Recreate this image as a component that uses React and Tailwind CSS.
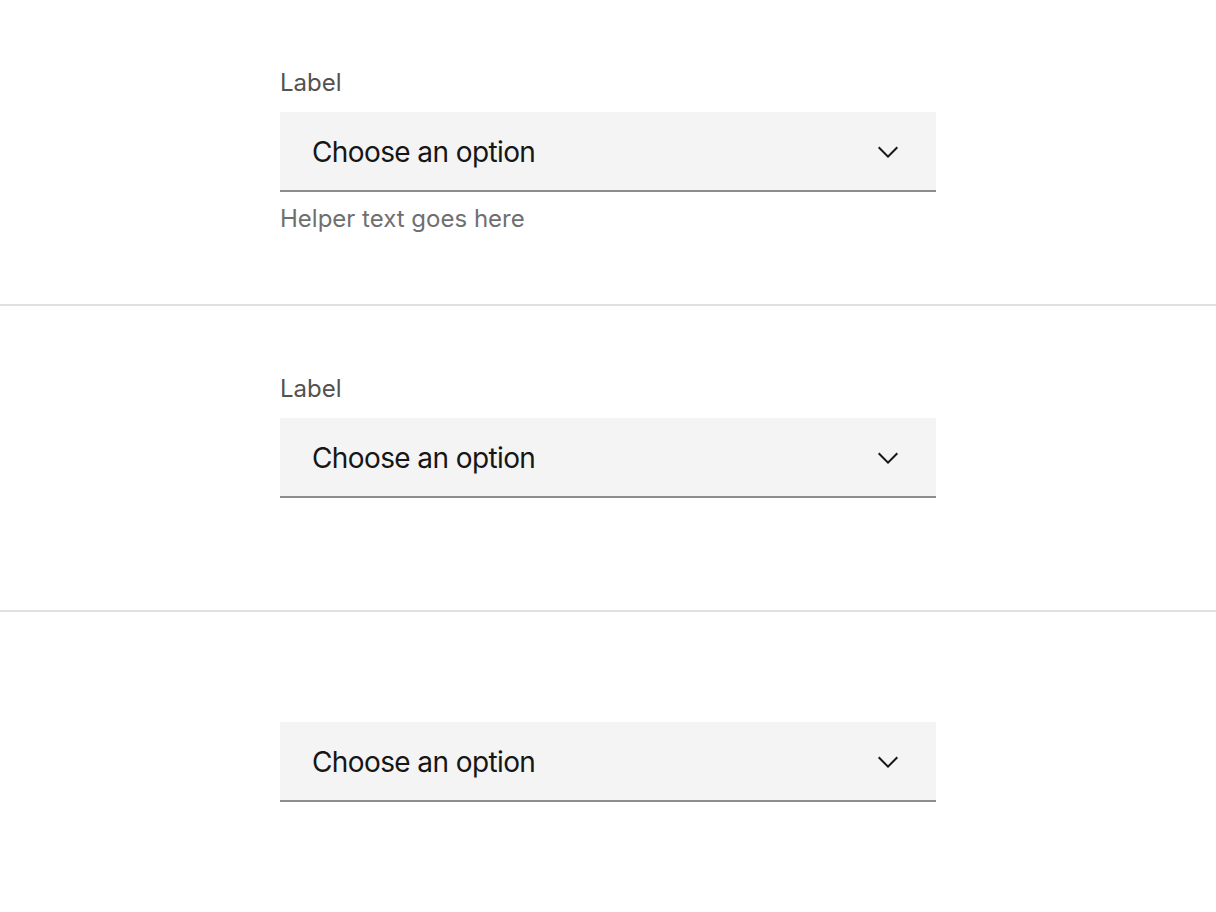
import React from "react";

const Chevron = () => (
  <svg className="mt-[2px]" width="32" height="32" viewBox="0 0 16 16" fill="#161616">
    <path d="M8 11L3 6 3.7 5.3 8 9.6 12.3 5.3 13 6z" />
  </svg>
);

const Dropdown = ({ label, helper }) => (
  <div className="w-[656px] ml-[280px]">
    {label && (
      <div className="pt-[3px] mb-[13px] text-[24px] leading-[32px] text-[#525252]">
        {label}
      </div>
    )}
    <div className="h-[80px] bg-[#f4f4f4] border-b-2 border-[#8d8d8d] flex items-center justify-between pl-8 pr-8">
      <span className="pt-[2px] text-[28px] leading-[36px] tracking-[-0.6px] text-[#161616]">
        Choose an option
      </span>
      <Chevron />
    </div>
    {helper && (
      <div className="mt-[11px] text-[24px] leading-[32px] text-[#6f6f6f]">
        {helper}
      </div>
    )}
  </div>
);

export default function App() {
  return (
    <div className="w-[1216px] h-[912px] bg-white overflow-hidden" style={{ fontFamily: "Inter, 'Noto Sans', sans-serif" }}>
      <div className="h-[306px] border-b-2 border-[#e0e0e0] pt-16">
        <Dropdown label="Label" helper="Helper text goes here" />
      </div>
      <div className="h-[306px] border-b-2 border-[#e0e0e0] pt-16">
        <Dropdown label="Label" />
      </div>
      <div className="pt-[110px]">
        <Dropdown />
      </div>
    </div>
  );
}
